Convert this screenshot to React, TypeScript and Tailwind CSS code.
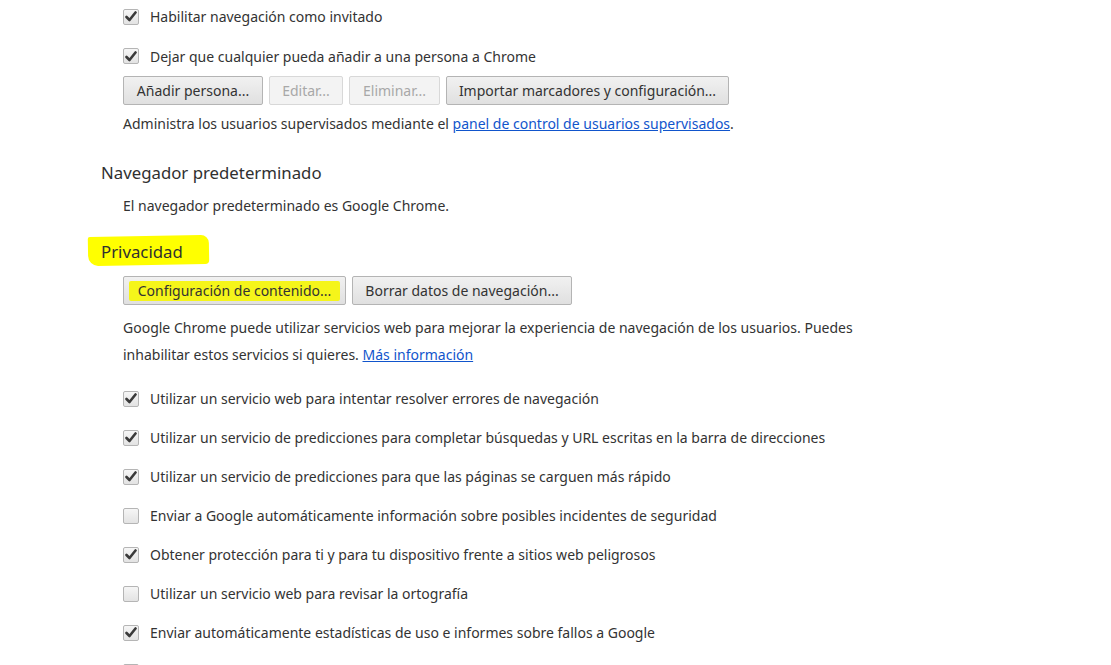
import React from "react";

const font = { fontFamily: '"Noto Sans", "Open Sans", sans-serif' };

function Check({ checked }: { checked: boolean }) {
  return (
    <span className="relative inline-flex h-[16px] w-[16px] shrink-0 items-center justify-center rounded-[2px] border border-[#b5b5b5] bg-gradient-to-b from-[#f6f6f6] to-[#e3e3e3]">
      {checked && (
        <svg width="12" height="11" viewBox="0 0 12 11" className="absolute">
          <path d="M1.5 6 L4.5 9 L10.5 1.5" fill="none" stroke="#3a3a3a" strokeWidth="2.6" strokeLinecap="round" strokeLinejoin="round" />
        </svg>
      )}
    </span>
  );
}

function Row({ checked, children }: { checked: boolean; children?: React.ReactNode }) {
  return (
    <div className="flex h-[39px] items-center gap-[11px] pl-[123px]">
      <Check checked={checked} />
      {children && <span className="whitespace-nowrap">{children}</span>}
    </div>
  );
}

function Btn({ children, disabled, w }: { children: React.ReactNode; disabled?: boolean; w?: string }) {
  return (
    <div
      className={
        "flex h-[29px] items-center justify-center whitespace-nowrap rounded-[2px] border " +
        (disabled
          ? "border-[#d8d8d8] bg-[#f3f3f3] text-[#a8a8a8]"
          : "border-[#b4b4b4] bg-gradient-to-b from-[#f1f1f1] to-[#e0e0e0] text-[#333]") +
        " " +
        (w ?? "")
      }
    >
      {children}
    </div>
  );
}

export default function App() {
  return (
    <div className="h-[665px] w-[1111px] overflow-hidden bg-white text-[14px] text-[#333]" style={font}>
      <div className="flex h-[33px] items-center gap-[11px] pl-[123px]">
        <Check checked />
        <span>Habilitar navegación como invitado</span>
      </div>
      <div className="mt-[6px] flex h-[34px] items-center gap-[11px] pl-[123px]">
        <Check checked />
        <span>Dejar que cualquier pueda añadir a una persona a Chrome</span>
      </div>
      <div className="mt-[3px] flex gap-[6px] pl-[123px]">
        <Btn w="w-[140px]">Añadir persona...</Btn>
        <Btn w="w-[74px]" disabled>Editar...</Btn>
        <Btn w="w-[91px]" disabled>Eliminar...</Btn>
        <Btn w="w-[283px]">Importar marcadores y configuración...</Btn>
      </div>
      <div className="mt-[9px] h-[20px] pl-[123px] leading-[20px]">
        Administra los usuarios supervisados mediante el{" "}
        <a className="text-[#1155cc] underline">panel de control de usuarios supervisados</a>.
      </div>
      <div className="mt-[27px] h-[24px] pl-[101px] text-[16.8px] leading-[24px] text-[#303030]">Navegador predeterminado</div>
      <div className="mt-[11px] h-[20px] pl-[123px] leading-[20px]">El navegador predeterminado es Google Chrome.</div>
      <div className="mt-[24px] h-[24px] pl-[101px] text-[16.8px] leading-[24px] text-[#303030]">
        <span className="relative inline-block">
          <span className="absolute left-[-13px] top-[-4px] h-[29px] w-[121px] -rotate-1 rounded-tl-[2px] rounded-tr-[8px] rounded-br-[4px] rounded-bl-[10px] bg-[#ffff00]" />
          <span className="relative">Privacidad</span>
        </span>
      </div>
      <div className="mt-[12px] flex gap-[6px] pl-[123px]">
        <Btn w="w-[223px] relative">
          <span className="absolute left-[5px] top-[4px] h-[20px] w-[211px] rounded-[2px] bg-[#f5f51a]" />
          <span className="relative">Configuración de contenido...</span>
        </Btn>
        <Btn w="w-[220px]">Borrar datos de navegación...</Btn>
      </div>
      <div className="mt-[9px] whitespace-nowrap pl-[123px] leading-[27px]">
        Google Chrome puede utilizar servicios web para mejorar la experiencia de navegación de los usuarios. Puedes
        <br />
        inhabilitar estos servicios si quieres. <a className="text-[#1155cc] underline">Más información</a>
      </div>
      <div className="mt-[11px]">
        <Row checked>Utilizar un servicio web para intentar resolver errores de navegación</Row>
        <Row checked>Utilizar un servicio de predicciones para completar búsquedas y URL escritas en la barra de direcciones</Row>
        <Row checked>Utilizar un servicio de predicciones para que las páginas se carguen más rápido</Row>
        <Row checked={false}>Enviar a Google automáticamente información sobre posibles incidentes de seguridad</Row>
        <Row checked>Obtener protección para ti y para tu dispositivo frente a sitios web peligrosos</Row>
        <Row checked={false}>Utilizar un servicio web para revisar la ortografía</Row>
        <Row checked>Enviar automáticamente estadísticas de uso e informes sobre fallos a Google</Row>
        <Row checked={false} />
      </div>
    </div>
  );
}
